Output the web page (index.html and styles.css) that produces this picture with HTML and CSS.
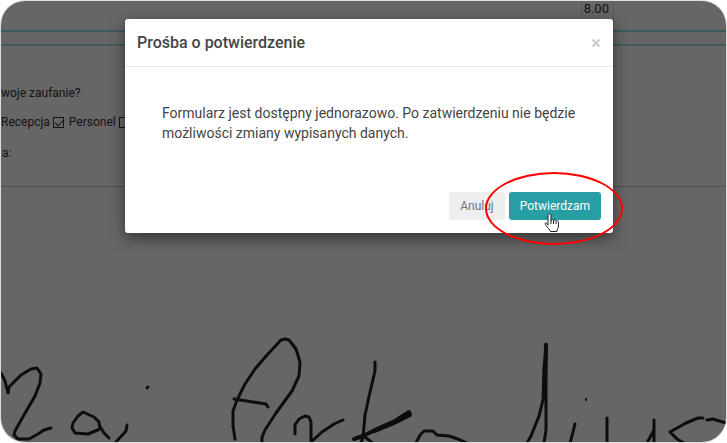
FILE: index.html
```html
<!DOCTYPE html>
<html lang="pl">
<head>
    <meta charset="UTF-8">
    <meta name="viewport" content="width=device-width, initial-scale=1.0">
    <title>Prośba o potwierdzenie</title>
    <link rel="stylesheet" href="styles.css">
</head>
<body>
    <div class="screen">
        <!-- Formularz w tle -->
        <main class="form-page">
            <div class="score-row">
                <div class="score">8.00</div>
            </div>
            <div class="divider-band"></div>
            <p class="question">woje zaufanie?</p>
            <div class="choices">
                <label for="recepcja">Recepcja</label>
                <input type="checkbox" id="recepcja" checked>
                <label for="personel">Personel</label>
                <input type="checkbox" id="personel">
            </div>
            <p class="note">a:</p>
            <svg class="signature" viewBox="0 0 725 117" aria-hidden="true">
                <path d="M0 48L4 56L7 68L8 62L20 50L30 44L36 43L40 49L39 58L34 71L23 90L14 106L13 110L17 114L28 114L37 109L43 105L50 103"/>
                <path d="M98 97L93 92L82 87L77 91L72 98L71 103L74 108L87 109L99 104L98 97M98 100L103 108L108 113"/>
                <path d="M126 100L125 106L114 118M146 63L147 62"/>
                <path d="M234 114L232 101V86L236 75L244 59L254 44L266 30L280 15L284 14L288 15L295 24L299 37L298 51L291 66L275 88L264 105L261 112V118"/>
                <path d="M233 74L265 79L267 82"/>
                <path d="M294 109V100L298 94L304 91L308 92L310 97V117L321 107L333 99L342 95"/>
                <path d="M374 37V46L369 67L364 90L362 112L360 118"/>
                <path class="thick" d="M353 114L362 111L378 103L394 96L408 87L409 90L393 98L374 106"/>
                <path d="M364 112L373 119M415 118L419 110L423 106L432 106L436 110L448 111L457 114L466 118"/>
                <path d="M545 19V70L545 105L543 118M545 25L543 42L542 75L538 91L530 111L526 118"/>
                <path class="thick" d="M545 20L544 58"/>
                <path class="dot" d="M585 74L585 75"/>
                <path d="M574 99L572 107L569 118M606 93V118M653 95V118M653 105L647 116"/>
                <path d="M702 93L697 93L685 98L669 107L676 114L683 118M706 95L712 94L725 98"/>
            </svg>
        </main>

        <!-- Okno potwierdzenia -->
        <div class="overlay">
            <div class="modal" role="dialog" aria-labelledby="modal-title">
                <div class="modal-header">
                    <h1 class="modal-title" id="modal-title">Prośba o potwierdzenie</h1>
                    <button class="close" type="button" aria-label="Zamknij">
                        <svg viewBox="0 0 10 10"><path d="M1.5 1.5L8.5 8.5M8.5 1.5L1.5 8.5"/></svg>
                    </button>
                </div>
                <div class="modal-body">
                    Formularz jest dostępny jednorazowo. Po zatwierdzeniu nie będzie możliwości zmiany wypisanych danych.
                </div>
                <div class="modal-footer">
                    <button class="btn btn-cancel" type="button">Anuluj</button>
                    <div class="confirm">
                        <button class="btn btn-confirm" type="button">Potwierdzam</button>
                        <span class="marker"></span>
                        <svg class="pointer" viewBox="0 0 16 20" aria-hidden="true">
                            <path d="M4 12V2.500C4 .5 7 .5 7 2.500V8C7 6 9.500 6 9.500 8C9.500 6.500 12 6.500 12 8.500C12 7.500 14.500 7.500 14.500 9.500V13C14.500 15 13 16 13 18.500H6.500C6.500 17 3 14.500 1.500 11.500C.5 9.500 2.500 9 4 12Z"/>
                            <path d="M7 8V11M9.500 8V11M12 9V11"/>
                        </svg>
                    </div>
                </div>
            </div>
        </div>
    </div>
</body>
</html>
```

FILE: styles.css
```css
* {
    margin: 0;
    padding: 0;
    box-sizing: border-box;
}

body {
    font-family: Roboto, 'Liberation Sans', sans-serif;
    background: #fff;
    color: #333;
}

.screen {
    position: relative;
    min-height: calc(100vh - 2px);
    margin: 1px;
    display: flex;
    border-radius: 24px;
    overflow: hidden;
    box-shadow: 0 0 0 1px #dcdfde;
}

/* Formularz */
.form-page {
    flex: 1;
    display: flex;
    flex-direction: column;
    background: #fff;
}

.score-row {
    height: 31px;
    display: flex;
    justify-content: flex-end;
    padding-right: 112px;
    border-bottom: 2px solid #96e4e8;
}

.score {
    width: 33px;
    padding-right: 4px;
    border: solid #e4e4e4;
    border-width: 0 1px;
    font-size: 13px;
    line-height: 16px;
    text-align: right;
}

.divider-band {
    height: 14px;
    border-bottom: 2px solid #a4e4e8;
}

.question {
    padding-top: 39px;
    font-size: 12px;
    line-height: 16px;
}

.choices {
    display: flex;
    align-items: center;
    gap: 3px;
    padding-top: 12px;
    font-size: 12px;
    line-height: 18px;
}

.choices input {
    appearance: none;
    width: 11px;
    height: 11px;
    margin-right: 2px;
    border: 1px solid #333;
    background: #fff;
}

.choices input:checked::before {
    content: '';
    display: block;
    width: 8px;
    height: 4px;
    margin: 1px 0 0 1px;
    border: solid #333;
    border-width: 0 0 1px 1px;
    transform: rotate(-45deg);
}

.note {
    padding: 14px 0 24px 1px;
    font-size: 12px;
    line-height: 17px;
    border-bottom: 1px solid #c8c8c8;
}

.signature {
    display: block;
    width: 100%;
    margin-top: auto;
    fill: none;
    stroke: #222;
    stroke-width: 3;
    stroke-linecap: round;
    stroke-linejoin: round;
}

.signature .thick {
    stroke-width: 4;
}

.signature .dot {
    stroke-width: 2;
}

/* Okno */
.overlay {
    position: absolute;
    inset: 0;
    padding: 18px 113px 18px 124px;
    background: rgba(0, 0, 0, 0.6);
}

.modal {
    background: #fff;
    border-radius: 3px;
    box-shadow: 0 5px 15px rgba(0, 0, 0, 0.5);
}

.modal-header {
    display: flex;
    align-items: center;
    justify-content: space-between;
    height: 48px;
    padding: 0 12px;
    border-bottom: 1px solid #e9e9e9;
}

.modal-title {
    font-size: 16px;
    font-weight: 500;
    line-height: 24px;
    color: #444;
}

.close {
    width: 10px;
    height: 10px;
    border: 0;
    background: none;
    cursor: pointer;
}

.close svg {
    display: block;
    fill: none;
    stroke: #ccc;
    stroke-width: 2;
}

.modal-body {
    padding: 36px;
    padding-left: 37px;
    font-size: 14px;
    line-height: 20px;
    color: #444;
}

.modal-footer {
    display: flex;
    justify-content: flex-end;
    gap: 4px;
    padding: 13px 12px;
}

.btn {
    height: 28px;
    padding: 0 11px;
    border: 0;
    border-radius: 3px;
    font-family: inherit;
    font-size: 12px;
    cursor: pointer;
}

.btn-cancel {
    background: #eee;
    color: #6c7784;
}

.btn-confirm {
    display: block;
    background: #279ea3;
    color: #fff;
}

.confirm {
    position: relative;
}

.marker {
    position: absolute;
    top: -20px;
    left: -24px;
    width: 138px;
    height: 73px;
    border: 2px solid #f00;
    border-radius: 50%;
    pointer-events: none;
}

.pointer {
    position: absolute;
    top: 21px;
    left: 35px;
    width: 16px;
    height: 20px;
    fill: #fff;
    stroke: #223;
    stroke-width: 1;
    pointer-events: none;
}
```
